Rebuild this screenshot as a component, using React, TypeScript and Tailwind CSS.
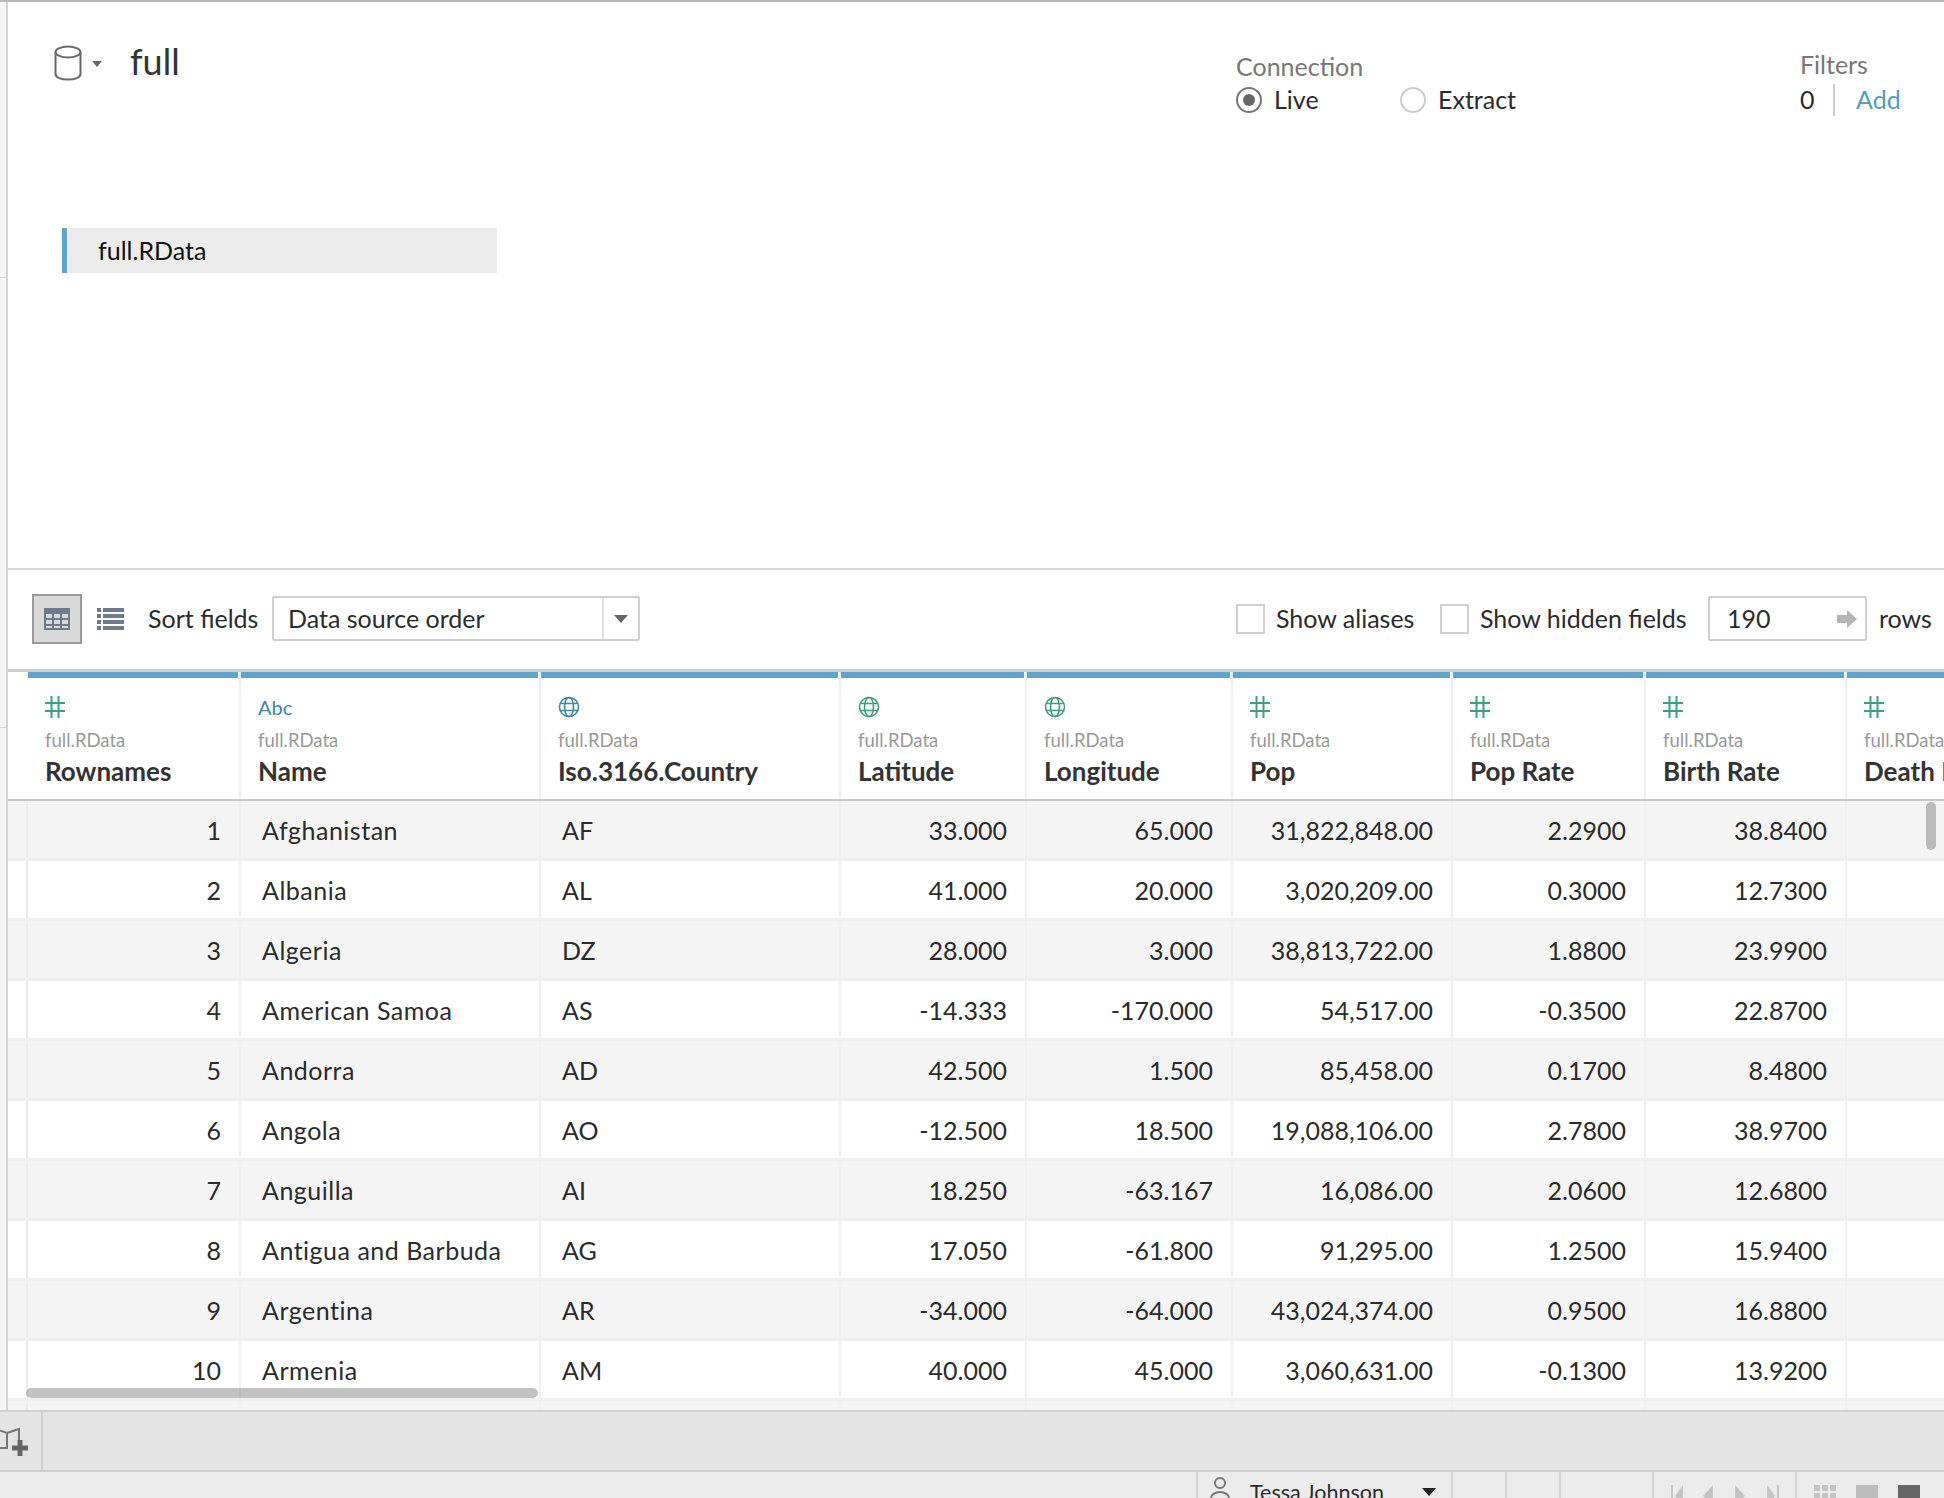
import React from 'react';

type Col = { name: string; kind: 'num' | 'abc' | 'geo' | 'geoGreen'; width: string; align: 'left' | 'right' };

const cols: Col[] = [
    { name: 'Rownames', kind: 'num', width: 'w-[213px]', align: 'right' },
    { name: 'Name', kind: 'abc', width: 'w-[300px]', align: 'left' },
    { name: 'Iso.3166.Country', kind: 'geo', width: 'w-[300px]', align: 'left' },
    { name: 'Latitude', kind: 'geoGreen', width: 'w-[186px]', align: 'right' },
    { name: 'Longitude', kind: 'geoGreen', width: 'w-[206px]', align: 'right' },
    { name: 'Pop', kind: 'num', width: 'w-[220px]', align: 'right' },
    { name: 'Pop Rate', kind: 'num', width: 'w-[193px]', align: 'right' },
    { name: 'Birth Rate', kind: 'num', width: 'w-[201px]', align: 'right' },
    { name: 'Death Rate', kind: 'num', width: 'w-[200px]', align: 'right' },
];

const rows: string[][] = [
    ['1', 'Afghanistan', 'AF', '33.000', '65.000', '31,822,848.00', '2.2900', '38.8400', ''],
    ['2', 'Albania', 'AL', '41.000', '20.000', '3,020,209.00', '0.3000', '12.7300', ''],
    ['3', 'Algeria', 'DZ', '28.000', '3.000', '38,813,722.00', '1.8800', '23.9900', ''],
    ['4', 'American Samoa', 'AS', '-14.333', '-170.000', '54,517.00', '-0.3500', '22.8700', ''],
    ['5', 'Andorra', 'AD', '42.500', '1.500', '85,458.00', '0.1700', '8.4800', ''],
    ['6', 'Angola', 'AO', '-12.500', '18.500', '19,088,106.00', '2.7800', '38.9700', ''],
    ['7', 'Anguilla', 'AI', '18.250', '-63.167', '16,086.00', '2.0600', '12.6800', ''],
    ['8', 'Antigua and Barbuda', 'AG', '17.050', '-61.800', '91,295.00', '1.2500', '15.9400', ''],
    ['9', 'Argentina', 'AR', '-34.000', '-64.000', '43,024,374.00', '0.9500', '16.8800', ''],
    ['10', 'Armenia', 'AM', '40.000', '45.000', '3,060,631.00', '-0.1300', '13.9200', ''],
];

const TypeIcon: React.FC<{ kind: Col['kind'] }> = ({ kind }) => {
    if (kind === 'abc') return <span className="text-[20px] leading-[22px] text-[#3f87a3]">Abc</span>;
    if (kind === 'geo' || kind === 'geoGreen') {
        return (
            <svg width="22" height="22" viewBox="0 0 22 22" fill="none" stroke={kind === 'geo' ? '#3f87a3' : '#3f9f78'} strokeWidth="1.6">
                <circle cx="11" cy="11" r="9.5" />
                <ellipse cx="11" cy="11" rx="4.5" ry="9.5" />
                <path d="M2.5 7.5h17M2.5 14.5h17" />
            </svg>
        );
    }
    return (
        <svg width="20" height="24" viewBox="0 0 20 24" fill="none" stroke="#3f9f78" strokeWidth="2">
            <path d="M6.5 1v22M13.5 1v22M0 8h20M0 16h20" />
        </svg>
    );
};

const StatusDivider: React.FC<{ className: string }> = ({ className }) => (
    <div className={`h-full border-l-2 border-[#d4d4d4] ${className}`}></div>
);

export default function App() {
    return (
        <div className="w-[1944px] h-[1498px] overflow-hidden flex flex-col bg-white text-[25px] text-[#2b2b2b] font-['Lato','Open_Sans',sans-serif]">
            <div className="h-[2px] shrink-0 bg-[#b8b8b8]"></div>
            <div className="flex h-[1408px] shrink-0">
                {/* left strip */}
                <div className="w-[8px] shrink-0 bg-[#f5f5f5] border-r-2 border-[#d4d4d4] flex flex-col">
                    <div className="h-[276px] border-b border-[#d8d8d8]"></div>
                    <div className="h-[450px] border-b border-[#d8d8d8]"></div>
                </div>
                <div className="flex-1 min-w-0 flex flex-col">
                    {/* connection header */}
                    <div className="h-[568px] shrink-0 border-b-2 border-[#d6d6d6] flex flex-col">
                        <div className="flex h-[226px] shrink-0">
                            <div className="w-[1228px] shrink-0 flex items-start pt-[34px] pl-[46px]">
                                <svg width="28" height="36" viewBox="0 0 28 36" fill="none" stroke="#6b6b6b" strokeWidth="2" className="mt-[9px]">
                                    <ellipse cx="14" cy="7" rx="12.5" ry="5.5" />
                                    <path d="M1.5 7v22c0 3.5 5.5 5.5 12.5 5.5s12.5-2 12.5-5.5V7" />
                                </svg>
                                <div className="w-0 h-0 mt-[25px] ml-[10px] border-x-[5px] border-x-transparent border-t-[6px] border-t-[#666]"></div>
                                <div className="ml-[28px] text-[36px] leading-[50px] text-[#333]">full</div>
                            </div>
                            <div className="w-[564px] shrink-0 pt-[49px]">
                                <div className="text-[25px] leading-[30px] text-[#777]">Connection</div>
                                <div className="flex items-center h-[38px]">
                                    <div className="w-[26px] h-[26px] rounded-full border-2 border-[#777] flex items-center justify-center">
                                        <div className="w-[12px] h-[12px] rounded-full bg-[#666]"></div>
                                    </div>
                                    <span className="ml-[12px] w-[126px]">Live</span>
                                    <div className="w-[26px] h-[26px] rounded-full border-2 border-[#ccc]"></div>
                                    <span className="ml-[12px]">Extract</span>
                                </div>
                            </div>
                            <div className="pt-[47px]">
                                <div className="text-[25px] leading-[30px] text-[#777]">Filters</div>
                                <div className="flex items-center h-[38px] mt-[2px]">
                                    <span className="w-[33px]">0</span>
                                    <div className="h-[32px] border-l-2 border-[#ccc]"></div>
                                    <span className="ml-[21px] text-[#4f9dbf]">Add</span>
                                </div>
                            </div>
                        </div>
                        <div className="ml-[54px] w-[435px] h-[45px] bg-[#ebebeb] border-l-[5px] border-[#5fa5c9] pl-[31px] flex items-center text-[#111]">
                            full.RData
                        </div>
                    </div>

                    {/* toolbar */}
                    <div className="h-[102px] shrink-0 border-b-[3px] border-[#cfcfcf] flex items-center pl-[24px] pb-[2px]">
                        <div className="w-[50px] h-[50px] bg-[#d9d9d9] border-2 border-[#9a9a9a] flex items-center justify-center">
                            <svg width="26" height="22" viewBox="0 0 26 22" fill="#6f7a8c">
                                <path fillRule="evenodd" d="M0 0h26v22H0zM2 6v4h6V6zm8 0v4h6V6zm8 0v4h6V6zM2 12v4h6v-4zm8 0v4h6v-4zm8 0v4h6v-4zM2 18v2h6v-2zm8 0v2h6v-2zm8 0v2h6v-2z" />
                            </svg>
                        </div>
                        <svg width="27" height="22" viewBox="0 0 27 22" fill="#6f7a8c" className="ml-[15px]">
                            <path d="M0 0h4v4H0zM6 0h21v4H6zM0 6h4v4H0zM6 6h21v4H6zM0 12h4v4H0zM6 12h21v4H6zM0 18h4v4H0zM6 18h21v4H6z" />
                        </svg>
                        <span className="ml-[24px] w-[124px]">Sort fields</span>
                        <div className="w-[368px] h-[45px] border-2 border-[#cfcfcf] rounded-[2px] flex items-center">
                            <span className="flex-1 pl-[14px]">Data source order</span>
                            <div className="w-[36px] h-full border-l-2 border-[#e0e0e0] flex items-center justify-center">
                                <div className="w-0 h-0 border-x-[7px] border-x-transparent border-t-[8px] border-t-[#666]"></div>
                            </div>
                        </div>
                        <div className="ml-[596px] w-[29px] h-[30px] border-2 border-[#d0d0d0]"></div>
                        <span className="ml-[11px] w-[164px]">Show aliases</span>
                        <div className="w-[29px] h-[30px] border-2 border-[#d0d0d0]"></div>
                        <span className="ml-[11px] w-[228px]">Show hidden fields</span>
                        <div className="w-[159px] h-[45px] border-2 border-[#cfcfcf] rounded-[2px] flex items-center pl-[17px] pr-[8px] justify-between">
                            <span>190</span>
                            <svg width="20" height="18" viewBox="0 0 20 18" fill="#b5b5b5"><path d="M0 5h10V0l10 9-10 9v-5H0z" /></svg>
                        </div>
                        <span className="ml-[12px]">rows</span>
                    </div>

                    {/* table */}
                    <div className="relative flex-1 min-h-0 overflow-hidden">
                        <div className="flex h-[129px] border-b-2 border-[#c8c8c8]">
                            <div className="w-[20px] shrink-0"></div>
                            {cols.map((c) => (
                                <div key={c.name} className={`${c.width} shrink-0 border-r-2 border-[#f0f0f0]`}>
                                    <div className="h-[6px] bg-[#5fa5c9] mr-[1px]"></div>
                                    <div className="pl-[17px] pt-[17px]">
                                        <div className="h-[24px] flex items-center"><TypeIcon kind={c.kind} /></div>
                                        <div className="mt-[9px] text-[18.5px] leading-[24px] text-[#999] whitespace-nowrap">full.RData</div>
                                        <div className="mt-[3px] text-[26px] leading-[32px] font-bold text-[#333] whitespace-nowrap">{c.name}</div>
                                    </div>
                                </div>
                            ))}
                        </div>
                        {rows.map((row, i) => (
                            <div key={row[0]} className={`flex h-[60px] border-b-[3px] border-[#f0f0f0] ${i % 2 === 0 ? 'bg-[#f4f4f4]' : 'bg-white'}`}>
                                <div className="w-[20px] shrink-0 border-r-2 border-[#ececec]"></div>
                                {cols.map((c, j) => (
                                    <div key={c.name} className={`${c.width} shrink-0 border-r-2 border-[#f0f0f0] flex items-center pt-[3px] ${c.align === 'right' ? 'justify-end pr-[18px]' : `pl-[21px] ${j === 1 ? 'tracking-[0.5px]' : ''}`}`}>
                                        {row[j]}
                                    </div>
                                ))}
                            </div>
                        ))}
                        <div className="flex h-[20px] bg-[#f4f4f4]">
                            <div className="w-[20px] shrink-0 border-r-2 border-[#ececec]"></div>
                            {cols.map((c) => (
                                <div key={c.name} className={`${c.width} shrink-0 border-r-2 border-[#f0f0f0]`}></div>
                            ))}
                        </div>
                        {/* scrollbars */}
                        <div className="absolute left-[18px] top-[716px] w-[512px] h-[10px] rounded-full bg-[#999]/60"></div>
                        <div className="absolute right-[8px] top-[130px] w-[10px] h-[48px] rounded-full bg-[#bbb]"></div>
                    </div>
                </div>
            </div>

            {/* sheet tabs */}
            <div className="h-[62px] shrink-0 bg-[#e4e4e4] border-y-2 border-[#d0d0d0] flex">
                <div className="w-[43px] border-r-2 border-[#d0d0d0] flex items-center">
                    <svg width="30" height="30" viewBox="0 0 30 30" fill="none" stroke="#777" strokeWidth="2">
                        <path d="M-4 3l11 4 12-4v22M7 7v15l-11 0" />
                        <path d="M20 14v16M12 22h16" stroke="#666" strokeWidth="5" />
                    </svg>
                </div>
            </div>

            {/* status bar */}
            <div className="flex-1 min-h-0 bg-[#ebebeb] flex overflow-hidden">
                <StatusDivider className="ml-[1196px]" />
                <div className="w-[253px] flex pl-[11px]">
                    <svg width="22" height="40" viewBox="0 0 22 40" fill="none" stroke="#777" strokeWidth="2" className="shrink-0 mt-[5px]">
                        <circle cx="11" cy="6" r="5" />
                        <path d="M2 30V21c0-3 4-6 9-6s9 3 9 6v9" />
                    </svg>
                    <span className="ml-[19px] mt-[6px] w-[172px] text-[21.5px] leading-[28px] whitespace-nowrap">Tessa Johnson</span>
                    <div className="w-0 h-0 mt-[16px] border-x-[7px] border-x-transparent border-t-[8px] border-t-[#222]"></div>
                </div>
                <StatusDivider className="" />
                <StatusDivider className="ml-[52px]" />
                <StatusDivider className="ml-[52px]" />
                <StatusDivider className="ml-[91px]" />
                <div className="w-[141px] flex items-start pt-[13px] pl-[17px] gap-[20px]">
                    {['M0 0h2v22H0zM12 0v22L4 11z', 'M10 0v22L0 11z', 'M0 0v22l10-11z', 'M0 0v22l8-11zM10 0h2v22h-2z'].map((d) => (
                        <svg key={d} width="12" height="22" viewBox="0 0 12 22" fill="#c4c4c4" className="shrink-0"><path d={d} /></svg>
                    ))}
                </div>
                <StatusDivider className="" />
                <div className="flex items-start pt-[13px] pl-[17px] gap-[20px]">
                    <svg width="22" height="22" viewBox="0 0 22 22" fill="#c4c4c4" className="shrink-0">
                        <path d="M0 0h6v6H0zM8 0h6v6H8zM16 0h6v6h-6zM0 8h6v6H0zM8 8h6v6H8zM16 8h6v6h-6zM0 16h6v6H0zM8 16h6v6H8zM16 16h6v6h-6z" />
                    </svg>
                    <div className="w-[22px] h-[22px] bg-[#bdbdbd]"></div>
                    <div className="w-[22px] h-[22px] bg-[#666]"></div>
                </div>
            </div>
        </div>
    );
}
